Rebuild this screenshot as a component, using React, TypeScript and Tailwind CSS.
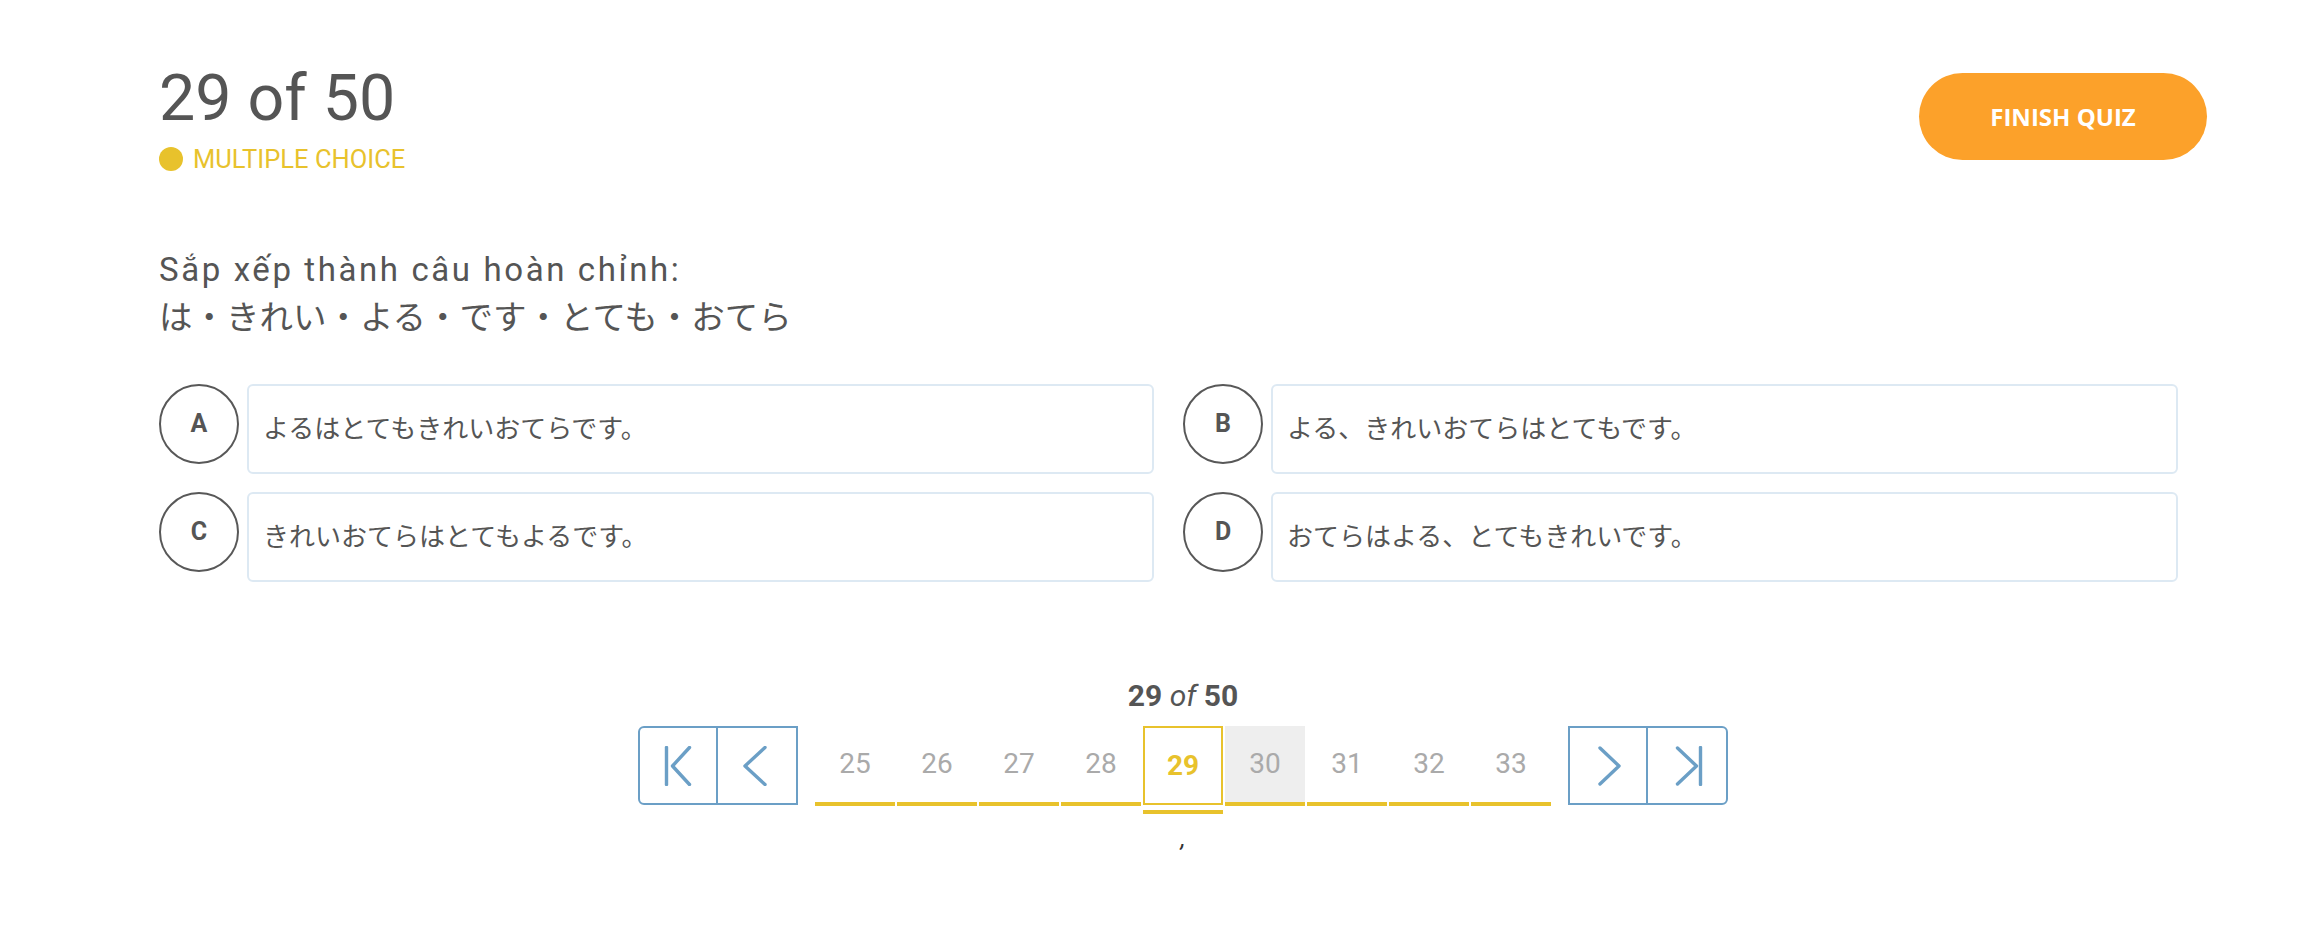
import React from "react";

const options = [
  { key: "A", text: "よるはとてもきれいおてらです。" },
  { key: "B", text: "よる、きれいおてらはとてもです。" },
  { key: "C", text: "きれいおてらはとてもよるです。" },
  { key: "D", text: "おてらはよる、とてもきれいです。" },
];

const pages = [25, 26, 27, 28, 29, 30, 31, 32, 33];
const current = 29;
const next = 30;

const NavIcon = ({ kind }: { kind: "first" | "prev" | "next" | "last" }) => (
  <svg width="40" height="40" viewBox="-20 -20 40 40" fill="none" stroke="#6b9fc6" strokeWidth="3.4" strokeLinecap="round" strokeLinejoin="round">
    {kind === "first" && (
      <>
        <path d="M-11.5 -18.5 V18.5" />
        <path d="M11.5 -18.5 L-5.5 0 L11.5 18.5" />
      </>
    )}
    {kind === "prev" && <path d="M8 -18.5 L-12 0 L8 18.5" />}
    {kind === "next" && <path d="M-8 -18 L11 0 L-8 18" />}
    {kind === "last" && (
      <>
        <path d="M-9.5 -18 L9.5 0 L-9.5 18" />
        <path d="M13.5 -18.5 V18.5" />
      </>
    )}
  </svg>
);

const App: React.FC = (): JSX.Element => {
  return (
    <div className="min-h-screen bg-white pl-[159px] pr-[105px] pt-[66px] font-['Roboto','Noto_Sans_CJK_JP',sans-serif] text-[#555555]">
      {/* header */}
      <div className="flex justify-between items-start">
        <div>
          <h1 className="text-[64.5px] leading-[64px] font-normal">29 of 50</h1>
          <div className="mt-[14px] flex items-center h-[30px]">
            <span className="w-[24px] h-[24px] rounded-full bg-[#e8c22c]" />
            <span className="ml-[10px] text-[25.5px] leading-[30px] text-[#e8c22c] uppercase">Multiple Choice</span>
          </div>
        </div>
        <button className="mt-[7px] w-[288px] h-[87px] rounded-full bg-[#fca12a] text-white font-['Open_Sans',sans-serif] font-bold text-[24px] uppercase">
          Finish Quiz
        </button>
      </div>

      {/* question */}
      <div className="mt-[72px] text-[33px] leading-[48px]">
        <div className="tracking-[2.6px]">Sắp xếp thành câu hoàn chỉnh:</div>
        <div className="text-[33.5px]">は・きれい・よる・です・とても・おてら</div>
      </div>

      {/* options */}
      <div className="mt-[42px] grid grid-cols-2 gap-y-[18px]">
        {options.map((o) => (
          <div key={o.key} className="flex items-start gap-[8px] pr-[29px]">
            <div className="shrink-0 w-[80px] h-[80px] rounded-full border-2 border-[#585858] flex items-center justify-center text-[25px] font-bold">
              {o.key}
            </div>
            <div className="flex-1 h-[90px] rounded-[6px] border-2 border-[#dde9f3] flex items-center pl-[14px] text-[26px]">
              {o.text}
            </div>
          </div>
        ))}
      </div>

      {/* pagination */}
      <div className="mt-[96px] flex flex-col items-center">
        <div className="text-[30px] leading-[36px]">
          <span className="font-bold">29</span> <span className="italic">of</span> <span className="font-bold">50</span>
        </div>
        <div className="mt-[12px] flex items-start">
          <div className="flex h-[79px] border-2 border-[#6b9fc6] rounded-l-[6px]">
            <button className="w-[78px] flex items-center justify-center border-r-2 border-[#6b9fc6]">
              <NavIcon kind="first" />
            </button>
            <button className="w-[78px] flex items-center justify-center">
              <NavIcon kind="prev" />
            </button>
          </div>
          <div className="mx-[17px] flex gap-[2px]">
            {pages.map((p) =>
              p === current ? (
                <div key={p} className="w-[80px] flex flex-col">
                  <div className="h-[79px] border-2 border-[#e8c22c] flex items-center justify-center text-[28px] font-bold text-[#e8c22c]">
                    {p}
                  </div>
                  <div className="mt-[5px] h-[4px] bg-[#e8c22c]" />
                </div>
              ) : (
                <div
                  key={p}
                  className={`w-[80px] h-[80px] border-b-4 border-[#e8c22c] flex items-center justify-center text-[28px] text-[#aaaaaa] ${p === next ? "bg-[#eeeeee]" : ""}`}
                >
                  {p}
                </div>
              )
            )}
          </div>
          <div className="flex h-[79px] border-2 border-[#6b9fc6] rounded-r-[6px]">
            <button className="w-[78px] flex items-center justify-center border-r-2 border-[#6b9fc6]">
              <NavIcon kind="next" />
            </button>
            <button className="w-[78px] flex items-center justify-center">
              <NavIcon kind="last" />
            </button>
          </div>
        </div>
        <div className="mt-[10px] text-[24px] leading-[30px] text-[#333333] italic">,</div>
      </div>
    </div>
  );
};

export default App;
